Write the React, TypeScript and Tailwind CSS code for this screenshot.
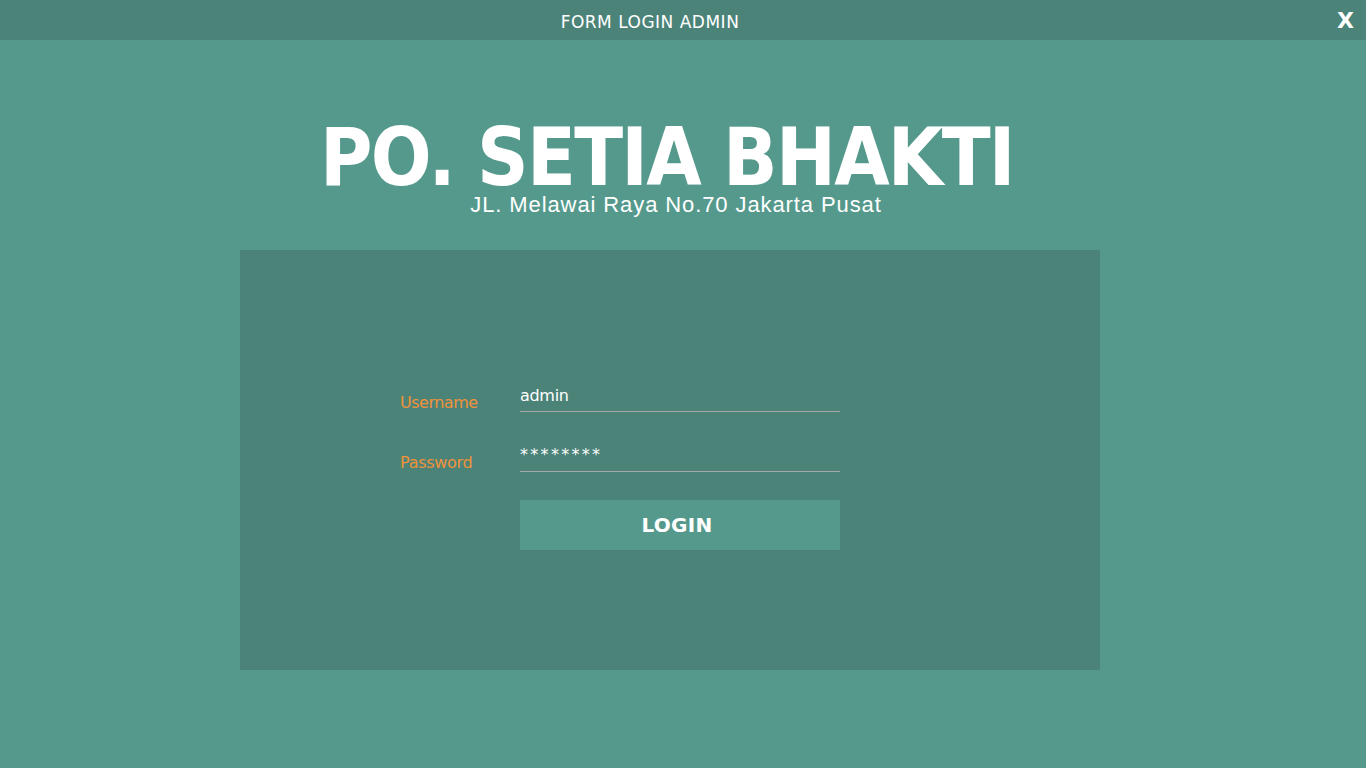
import { useState } from 'react'

export default function App() {
  const [username, setUsername] = useState('admin')
  const [password, setPassword] = useState('12345678')

  return (
    <div className="w-[1366px] h-[768px] bg-[#55998c] flex flex-col font-['DejaVu_Sans',sans-serif] overflow-hidden">
      {/* Title bar */}
      <div className="h-10 bg-[#4b8379] flex items-center relative shrink-0">
        <div className="w-full text-center pt-[5px] text-white text-[17px] tracking-[0.5px] mr-[66px]">
          FORM LOGIN ADMIN
        </div>
        <button className="absolute right-[12px] top-[9px] text-white text-[22px] font-bold leading-6">
          X
        </button>
      </div>

      {/* Heading */}
      <div className="flex flex-col items-center mt-[83px] mr-[32px]">
        <h1 className="text-white font-bold text-[81px] leading-[68px] tracking-[-2px] whitespace-nowrap scale-x-[0.885]">
          PO. SETIA BHAKTI
        </h1>
        <p className="text-white text-[22px] leading-5 tracking-[0.9px] font-['Liberation_Sans',sans-serif] ml-[18px] mt-[4px]">
          JL. Melawai Raya No.70 Jakarta Pusat
        </p>
      </div>

      {/* Login panel */}
      <div className="ml-[240px] mt-[35px] w-[860px] h-[420px] bg-[#4b8379] pt-[134px] pl-[160px]">
        <div className="flex items-end h-[28px]">
          <label className="w-[120px] text-[#f0923a] text-[16px] tracking-[-0.5px] leading-5 mb-[-1px]">
            Username
          </label>
          <input
            value={username}
            onChange={(e) => setUsername(e.target.value)}
            className="w-[320px] h-[28px] bg-transparent border-b border-[#a3aaa9] text-white text-[16px] tracking-[-0.3px] outline-none pb-[5px]"
          />
        </div>
        <div className="flex items-end h-[28px] mt-[32px]">
          <label className="w-[120px] text-[#f0923a] text-[16px] tracking-[-0.3px] leading-5 mb-[-1px]">
            Password
          </label>
          <div className="w-[320px] h-[28px] border-b border-[#a3aaa9] text-white text-[16px] tracking-[2.3px] flex items-start">
            <span className="mt-[-1px]">********</span>
            <input
              type="password"
              value={password}
              onChange={(e) => setPassword(e.target.value)}
              className="hidden"
            />
          </div>
        </div>
        <button className="ml-[120px] mt-[28px] w-[320px] h-[50px] bg-[#55998c] text-white font-bold text-[20px] tracking-[0.3px] pr-[6px] flex items-center justify-center">
          LOGIN
        </button>
      </div>
    </div>
  )
}
